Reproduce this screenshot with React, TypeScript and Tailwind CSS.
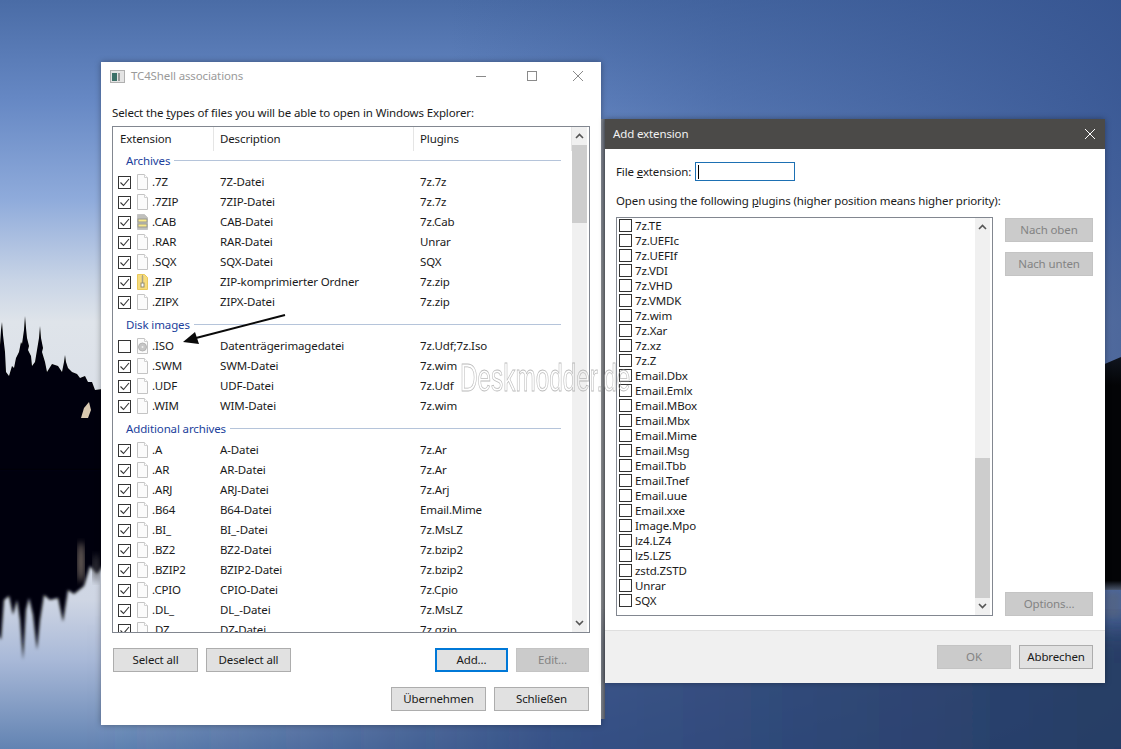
import React from 'react';

interface Row {
  ext: string;
  desc: string;
  plugin: string;
  icon?: 'file' | 'cab' | 'zip' | 'iso';
  off?: boolean;
}

const archives: Row[] = [
  { ext: '.7Z', desc: '7Z-Datei', plugin: '7z.7z' },
  { ext: '.7ZIP', desc: '7ZIP-Datei', plugin: '7z.7z' },
  { ext: '.CAB', desc: 'CAB-Datei', plugin: '7z.Cab', icon: 'cab' },
  { ext: '.RAR', desc: 'RAR-Datei', plugin: 'Unrar' },
  { ext: '.SQX', desc: 'SQX-Datei', plugin: 'SQX' },
  { ext: '.ZIP', desc: 'ZIP-komprimierter Ordner', plugin: '7z.zip', icon: 'zip' },
  { ext: '.ZIPX', desc: 'ZIPX-Datei', plugin: '7z.zip' },
];

const diskImages: Row[] = [
  { ext: '.ISO', desc: 'Datenträgerimagedatei', plugin: '7z.Udf;7z.Iso', icon: 'iso', off: true },
  { ext: '.SWM', desc: 'SWM-Datei', plugin: '7z.wim' },
  { ext: '.UDF', desc: 'UDF-Datei', plugin: '7z.Udf' },
  { ext: '.WIM', desc: 'WIM-Datei', plugin: '7z.wim' },
];

const additional: Row[] = [
  { ext: '.A', desc: 'A-Datei', plugin: '7z.Ar' },
  { ext: '.AR', desc: 'AR-Datei', plugin: '7z.Ar' },
  { ext: '.ARJ', desc: 'ARJ-Datei', plugin: '7z.Arj' },
  { ext: '.B64', desc: 'B64-Datei', plugin: 'Email.Mime' },
  { ext: '.BI_', desc: 'BI_-Datei', plugin: '7z.MsLZ' },
  { ext: '.BZ2', desc: 'BZ2-Datei', plugin: '7z.bzip2' },
  { ext: '.BZIP2', desc: 'BZIP2-Datei', plugin: '7z.bzip2' },
  { ext: '.CPIO', desc: 'CPIO-Datei', plugin: '7z.Cpio' },
  { ext: '.DL_', desc: 'DL_-Datei', plugin: '7z.MsLZ' },
  { ext: '.DZ', desc: 'DZ-Datei', plugin: '7z.gzip' },
];

const plugins = [
  '7z.TE', '7z.UEFIc', '7z.UEFIf', '7z.VDI', '7z.VHD', '7z.VMDK', '7z.wim', '7z.Xar', '7z.xz', '7z.Z',
  'Email.Dbx', 'Email.Emlx', 'Email.MBox', 'Email.Mbx', 'Email.Mime', 'Email.Msg', 'Email.Tbb', 'Email.Tnef',
  'Email.uue', 'Email.xxe', 'Image.Mpo', 'lz4.LZ4', 'lz5.LZ5', 'zstd.ZSTD', 'Unrar', 'SQX',
];

const FileIcon = ({ type = 'file' }: { type?: Row['icon'] }) => (
  <svg width="13" height="16" viewBox="0 0 13 16" className="shrink-0">
    <path d="M1.5.5h7l3 3v12h-10z" fill={type === 'zip' ? '#f7dc7c' : type === 'cab' ? '#c0c0bc' : '#fbfbfb'} stroke={type === 'zip' ? '#e8c95c' : '#c4c4c4'} />
    {type !== 'zip' && type !== 'cab' && <path d="M8.5.5v3h3" fill="#fff" stroke="#d0d0d0" />}
    {type === 'zip' && <path d="M6.5 1v9M5.500 3h2M5.500 5h2M5.500 7h2" stroke="#a8a388" />}
    {type === 'zip' && <rect x="5" y="9" width="3" height="4" fill="#fff" stroke="#8f8a70" />}
    {type === 'cab' && <rect x="2" y="5" width="9" height="3" fill="#f8e88a" stroke="#9a9a90" />}
    {type === 'cab' && <rect x="2" y="10" width="9" height="3" fill="#f8e88a" stroke="#9a9a90" />}
    {type === 'iso' && <circle cx="6.5" cy="9" r="4" fill="#c6c6c6" stroke="#b4b4b4" />}
    {type === 'iso' && <circle cx="6.5" cy="9" r="1" fill="#eeeeee" />}
  </svg>
);

const CheckBox = ({ checked }: { checked: boolean }) => (
  <div className="flex h-[13px] w-[13px] shrink-0 items-center justify-center border border-[#333] bg-white">
    {checked && (
      <svg width="11" height="11" viewBox="0 0 11 11">
        <path d="M1.5 5.500l3 3 5.500-6.500" fill="none" stroke="#333" strokeWidth="1.100" />
      </svg>
    )}
  </div>
);

const Group = ({ title, rows }: { title: string; rows: Row[] }) => (
  <div>
    <div className="flex h-6 items-center pl-[13px] pr-[11px]">
      <span className="pt-[2px] text-[#1c3f9c]">{title}</span>
      <div className="ml-[4px] h-px flex-1 bg-[#b5c4da]" />
    </div>
    {rows.map((r) => (
      <div key={r.ext} className="flex h-5 items-center">
        <div className="flex w-[100px] items-center pl-[5px]">
          <CheckBox checked={!r.off} />
          <div className="ml-[5px] mr-[3px]"><FileIcon type={r.icon} /></div>
          <span>{r.ext}</span>
        </div>
        <div className="w-[200px] pl-[7px]">{r.desc}</div>
        <div className="pl-[7px]">{r.plugin}</div>
      </div>
    ))}
  </div>
);

const ScrollBar = ({ thumbTop, thumbHeight }: { thumbTop: string; thumbHeight: string }) => (
  <div className="mr-[2px] flex w-[15px] shrink-0 flex-col bg-[#f0f0f0]">
    <div className="flex h-[18px] items-center justify-center">
      <svg width="9" height="6" viewBox="0 0 9 6"><path d="M1 5l3.500-3.500L8 5" fill="none" stroke="#555" strokeWidth="1.600" /></svg>
    </div>
    <div className="flex-1">
      <div className={`${thumbTop} ${thumbHeight} bg-[#cdcdcd]`} />
    </div>
    <div className="flex h-[18px] items-center justify-center">
      <svg width="9" height="6" viewBox="0 0 9 6"><path d="M1 1l3.500 3.500L8 1" fill="none" stroke="#555" strokeWidth="1.600" /></svg>
    </div>
  </div>
);

const Btn = ({ label, w, disabled, focus }: { label: string; w: string; disabled?: boolean; focus?: boolean }) => (
  <div
    className={`flex h-6 items-center justify-center pb-px ${w} ${
      disabled
        ? 'border border-[#c4c4c4] bg-[#cbcbcb] text-[#838383]'
        : focus
        ? 'border-2 border-[#0078d7] bg-[#e1e1e1]'
        : 'border border-[#adadad] bg-[#e1e1e1]'
    }`}
  >
    {label}
  </div>
);

const Wallpaper = () => (
  <svg viewBox="0 0 1121 749" className="absolute inset-0 h-full w-full">
    <defs>
      <linearGradient id="sky" gradientUnits="userSpaceOnUse" x1="0" y1="0" x2="0" y2="749">
        <stop offset="0" stopColor="#4a6ca6" />
        <stop offset="0.133" stopColor="#6688c4" />
        <stop offset="0.267" stopColor="#8fabdb" />
        <stop offset="0.374" stopColor="#c8d4e6" />
        <stop offset="0.43" stopColor="#dfe4ea" />
        <stop offset="0.8" stopColor="#cfd6e4" />
        <stop offset="0.88" stopColor="#a9b9d8" />
        <stop offset="1" stopColor="#6283b2" />
      </linearGradient>
      <linearGradient id="skyRight" gradientUnits="userSpaceOnUse" x1="450" y1="0" x2="1121" y2="0">
        <stop offset="0" stopColor="#3a5a96" stopOpacity="0" />
        <stop offset="0.4" stopColor="#3a5a96" stopOpacity="0.5" />
        <stop offset="1" stopColor="#34528e" stopOpacity="0.85" />
      </linearGradient>
      <linearGradient id="lakeRight" gradientUnits="userSpaceOnUse" x1="100" y1="0" x2="1121" y2="0">
        <stop offset="0" stopColor="#2f4a80" stopOpacity="0" />
        <stop offset="0.45" stopColor="#2f4a80" stopOpacity="0.85" />
        <stop offset="1" stopColor="#24395f" stopOpacity="0.9" />
      </linearGradient>
      <linearGradient id="hill" x1="0" y1="0" x2="0" y2="1">
        <stop offset="0" stopColor="#10151f" />
        <stop offset="0.12" stopColor="#030406" />
        <stop offset="0.96" stopColor="#030406" />
        <stop offset="1" stopColor="#4a566c" />
      </linearGradient>
      <linearGradient id="gap" x1="0" y1="0" x2="1" y2="0">
        <stop offset="0" stopColor="#a8a8a8" />
        <stop offset="1" stopColor="#5a5a5a" />
      </linearGradient>
      <filter id="soft"><feGaussianBlur stdDeviation="0.6" /></filter>
      <filter id="mid"><feGaussianBlur stdDeviation="1.500" /></filter>
      <filter id="softer"><feGaussianBlur stdDeviation="3" /></filter>
      <filter id="wide"><feGaussianBlur stdDeviation="14" /></filter>
    </defs>
    <rect width="1121" height="749" fill="url(#sky)" />
    <rect x="450" width="671" height="749" fill="url(#skyRight)" />
    <rect x="100" y="625" width="1060" height="160" fill="url(#lakeRight)" filter="url(#wide)" />
    {/* tree line */}
    <path
      filter="url(#soft)"
      fill="#050607"
      d="M-10 345L0 345L1 330L2 322L3 335L5 352L6 372L9 376L12 366L14 368L16 358L19 352L21 342L22 344L24 330L25 316L26 328L27 338L29 346L28 350L31 356L32 366L35 362L37 350L39 338L40 326L41 338L43 348L42 352L45 362L47 372L52 364L58 366L62 372L64 362L65 355L66 362L68 368L72 372L77 374L80 378L85 376L88 382L92 382L95 390L110 388L110 500L-10 500Z"
    />
    {/* reflection */}
    <path
      filter="url(#mid)"
      fill="#050607"
      d="M-10 470L110 470L110 556L97 574L90 566L84 586L74 594L68 590L63 622L58 598L50 600L44 595L40 620L37 650L33 615L29 598L26 610L23 660L20 620L17 600L13 615L9 596L4 600L1 640L-10 620Z"
    />
    <path d="M81 418L84 408L89 402L91 410L88 418Z" fill="#d8c8b0" filter="url(#soft)" />
    <ellipse cx="81" cy="562" rx="3" ry="20" fill="#a89888" opacity="0.8" filter="url(#softer)" />
    <ellipse cx="96" cy="568" rx="3" ry="14" fill="#4a4a4e" opacity="0.8" filter="url(#softer)" />
    <path d="M1100 366L1121 357V590H1100Z" fill="url(#hill)" />
    <path d="M1105 592h16v26h-16z" fill="#55627a" opacity="0.6" filter="url(#softer)" />
    <rect x="601" y="119" width="4" height="600" fill="url(#gap)" opacity="0.8" />
  </svg>
);

export default function App() {
  return (
    <div className="relative h-[749px] w-[1121px] overflow-hidden font-['Noto_Sans',sans-serif] text-[11.5px] leading-4 tracking-[-0.13px] text-[#1a1a1a]">
      <Wallpaper />

      <div className="absolute left-[101px] top-[62px] flex h-[663px] w-[500px] flex-col bg-white shadow-[0_0_6px_rgba(0,0,0,0.35)]">
        <div className="flex h-[30px] items-center pb-[2px] pl-[9px] text-[#9a9a9a]">
          <svg width="15" height="13" viewBox="0 0 15 13">
            <rect x=".5" y=".5" width="14" height="12" fill="#e4e4e4" stroke="#b0b0b0" />
            <rect x="2" y="3" width="5" height="8" fill="#3c7068" />
            <rect x="8" y="3" width="2" height="8" fill="#9a9a9a" />
          </svg>
          <span className="ml-[6px]">TC4Shell associations</span>
          <div className="ml-auto flex items-center">
            <div className="h-px w-[10px] bg-[#8a8a8a]" />
            <div className="ml-[41px] h-[10px] w-[10px] border border-[#8a8a8a]" />
            <svg width="12" height="12" viewBox="0 0 12 12" className="ml-[35px] mr-[17px]"><path d="M1 1l10 10M11 1L1 11" stroke="#8a8a8a" /></svg>
          </div>
        </div>
        <div className="mt-[13px] pl-[11px]">
          Select the <span className="underline">t</span>ypes of files you will be able to open in Windows Explorer:
        </div>
        <div className="ml-[11px] mt-[5px] flex h-[507px] w-[478px] border border-[#828790]">
          <div className="flex min-w-0 flex-1 flex-col overflow-hidden">
            <div className="flex h-[21px] shrink-0 items-start">
              <div className="flex h-[24px] w-[101px] items-center border-r border-[#e5e5e5] pl-[7px]">Extension</div>
              <div className="flex h-[24px] w-[200px] items-center border-r border-[#e5e5e5] pl-[6px]">Description</div>
              <div className="flex h-[24px] flex-1 items-center border-r border-[#e5e5e5] pl-[6px]">Plugins</div>
            </div>
            <Group title="Archives" rows={archives} />
            <Group title="Disk images" rows={diskImages} />
            <Group title="Additional archives" rows={additional} />
          </div>
          <ScrollBar thumbTop="mt-0" thumbHeight="h-[78px]" />
        </div>
        <div className="mt-[15px] flex pl-[12px] pr-[12px]">
          <Btn label="Select all" w="w-[85px]" />
          <div className="ml-2"><Btn label="Deselect all" w="w-[85px]" /></div>
          <div className="ml-auto"><Btn label="Add..." w="w-[73px]" focus /></div>
          <div className="ml-2"><Btn label="Edit..." w="w-[73px]" disabled /></div>
        </div>
        <div className="mt-[15px] flex justify-end gap-2 pr-[12px]">
          <Btn label="Übernehmen" w="w-[95px]" />
          <Btn label="Schließen" w="w-[95px]" />
        </div>
      </div>

      <div className="absolute left-[605px] top-[119px] flex h-[564px] w-[500px] flex-col bg-white shadow-[0_0_6px_rgba(0,0,0,0.35)]">
        <div className="flex h-[30px] shrink-0 items-center bg-[#4b4a48] pb-px pl-2 text-[#f2f2f2]">
          Add extension
          <svg width="12" height="12" viewBox="0 0 12 12" className="ml-auto mr-[9px]"><path d="M1 1l10 10M11 1L1 11" stroke="#fff" /></svg>
        </div>
        <div className="flex-1 pl-[11px] pr-3">
          <div className="mt-[13px] flex h-[19px] items-center">
            <div className="w-[79px] pt-px">File <span className="underline">e</span>xtension:</div>
            <div className="flex h-[19px] w-[100px] items-center border border-[#1d70b3] pl-[2px]">
              <div className="h-[14px] w-px bg-black" />
            </div>
          </div>
          <div className="mt-[12px]">Open using the following <span className="underline">p</span>lugins (higher position means higher priority):</div>
          <div className="mt-[8px] flex h-[399px]">
            <div className="flex w-[377px] border border-[#828790]">
              <div className="flex-1 overflow-hidden pl-[2px]">
                {plugins.map((p) => (
                  <div key={p} className="flex h-[15px] items-center">
                    <CheckBox checked={false} />
                    <span className="ml-[3px]">{p}</span>
                  </div>
                ))}
              </div>
              <ScrollBar thumbTop="mt-[222px]" thumbHeight="h-[140px]" />
            </div>
            <div className="ml-3 flex flex-1 flex-col pt-px">
              <Btn label="Nach oben" w="w-[88px]" disabled />
              <div className="mt-[10px]"><Btn label="Nach unten" w="w-[88px]" disabled /></div>
              <div className="mt-auto"><Btn label="Options..." w="w-[88px]" disabled /></div>
            </div>
          </div>
        </div>
        <div className="flex h-[53px] shrink-0 items-center justify-end gap-2 border-t border-[#dfdfdf] bg-[#f0f0f0] pr-3">
          <Btn label="OK" w="w-[74px]" disabled />
          <Btn label="Abbrechen" w="w-[74px]" />
        </div>
      </div>

      <svg width="110" height="34" viewBox="0 0 110 34" className="absolute left-[180px] top-[312px]">
        <path d="M105 3L16 26" stroke="#0a0a0a" strokeWidth="2" />
        <path d="M3 30L15 20l4 12z" fill="#0a0a0a" />
      </svg>

      <div className="absolute left-[460px] top-[354px] origin-left scale-x-[0.64] font-['Liberation_Sans',sans-serif] text-[38px] leading-[48px] tracking-normal text-transparent [-webkit-text-stroke:0.8px_rgba(170,170,170,0.8)]">
        Deskmodder.de
      </div>
    </div>
  );
}
